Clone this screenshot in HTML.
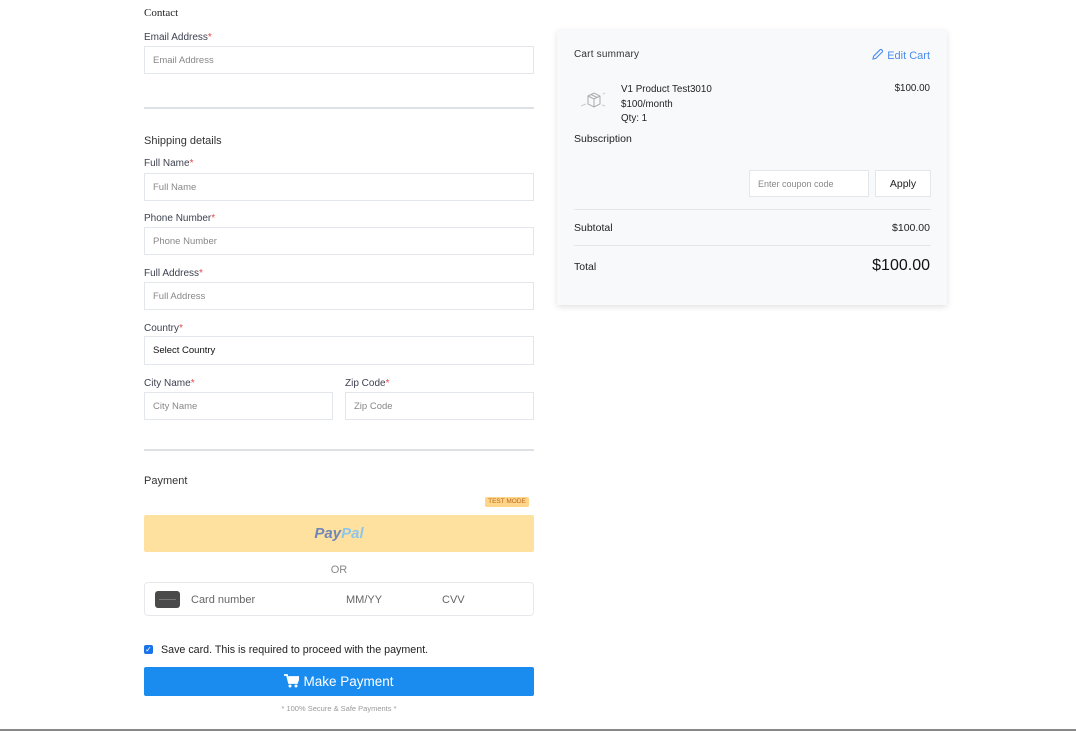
<!DOCTYPE html>
<html><head><meta charset="utf-8"><style>
*{margin:0;padding:0;box-sizing:border-box}
body{width:1076px;height:731px;background:#fff;position:relative;overflow:hidden;font-family:"Liberation Sans",sans-serif;color:#333}
.a{position:absolute;white-space:nowrap}
.lbl{font-size:10px;color:#3d4250}
.lbl b{color:#e5484d;font-weight:normal}
.in{position:absolute;border:1px solid #e3e6ea;background:#fff;font-size:9.5px;color:#888;padding-left:8px;display:flex;align-items:center}
.hr{position:absolute;left:144px;width:390px;height:2px;background:#dde1e6}
</style></head><body>
<div class="a" style="left:144px;top:7px;font-family:'Liberation Serif',serif;font-size:11px;color:#222">Contact</div>
<div class="a lbl" style="left:144px;top:32px">Email Address<b>*</b></div>
<div class="in" style="left:144px;top:46px;width:390px;height:28px">Email Address</div>
<div class="hr" style="top:107px"></div>
<div class="a" style="left:144px;top:135px;font-size:11px;color:#333">Shipping details</div>
<div class="a lbl" style="left:144px;top:158px">Full Name<b>*</b></div>
<div class="in" style="left:144px;top:173px;width:390px;height:28px">Full Name</div>
<div class="a lbl" style="left:144px;top:213px">Phone Number<b>*</b></div>
<div class="in" style="left:144px;top:227px;width:390px;height:28px">Phone Number</div>
<div class="a lbl" style="left:144px;top:268px">Full Address<b>*</b></div>
<div class="in" style="left:144px;top:282px;width:390px;height:28px">Full Address</div>
<div class="a lbl" style="left:144px;top:323px">Country<b>*</b></div>
<div class="in" style="left:144px;top:336px;width:390px;height:29px;color:#111">Select Country</div>
<div class="a lbl" style="left:144px;top:378px">City Name<b>*</b></div>
<div class="in" style="left:144px;top:392px;width:189px;height:28px">City Name</div>
<div class="a lbl" style="left:345px;top:378px">Zip Code<b>*</b></div>
<div class="in" style="left:345px;top:392px;width:189px;height:28px">Zip Code</div>
<div class="hr" style="top:449px"></div>
<div class="a" style="left:144px;top:475px;font-size:11px;color:#333">Payment</div>
<div class="a" style="left:485px;top:497px;width:44px;height:10px;background:#fdd68a;border-radius:2px;font-size:6.5px;color:#c0651a;text-align:center;line-height:10px">TEST MODE</div>
<div class="a" style="left:144px;top:515px;width:390px;height:37px;background:#fee19f;border-radius:2px;text-align:center;line-height:37px;font-size:15px;font-weight:bold;font-style:italic"><span style="color:#6f86b8">Pay</span><span style="color:#8ec6ea">Pal</span></div>
<div class="a" style="left:144px;top:564px;width:390px;text-align:center;font-size:11px;color:#888">OR</div>
<div class="a" style="left:144px;top:582px;width:390px;height:34px;border:1px solid #e6e8eb;border-radius:4px"></div>
<div class="a" style="left:155px;top:591px;width:25px;height:17px;background:#4a4a4a;border-radius:3px"><div style="position:absolute;left:4px;top:8px;width:17px;height:1px;background:#777"></div></div>
<div class="a" style="left:191px;top:594px;font-size:11px;color:#666">Card number</div>
<div class="a" style="left:346px;top:594px;font-size:11px;color:#666">MM/YY</div>
<div class="a" style="left:442px;top:594px;font-size:11px;color:#666">CVV</div>
<div class="a" style="left:144px;top:645px;width:9px;height:9px;background:#1a73e8;border-radius:2px;color:#fff;font-size:8px;line-height:9px;text-align:center">✓</div>
<div class="a" style="left:161px;top:644px;font-size:10.7px;color:#222">Save card. This is required to proceed with the payment.</div>
<div class="a" style="left:144px;top:667px;width:390px;height:29px;background:#1a8cf0;border-radius:2px;color:#fff;font-size:13.5px;text-align:center;line-height:29px">
<svg width="15" height="14" viewBox="0 0 15 14" style="vertical-align:-2px;margin-right:4px"><path d="M0 1h3l2 8h8l2-6H4.5" fill="none" stroke="#fff" stroke-width="1.8"/><path d="M4.5 3h10l-2 6h-7z" fill="#fff"/><circle cx="6" cy="12" r="1.5" fill="#fff"/><circle cx="12" cy="12" r="1.5" fill="#fff"/></svg>Make Payment</div>
<div class="a" style="left:144px;top:704px;width:390px;text-align:center;font-size:7.5px;color:#999">* 100% Secure &amp; Safe Payments *</div>
<div class="a" style="left:0;top:729px;width:1076px;height:2px;background:#888"></div>

<div class="a" style="left:557px;top:30px;width:390px;height:275px;background:#f8f9fb;box-shadow:0 2px 6px rgba(0,0,0,.12)">
<div class="a" style="left:17px;top:19px;font-size:10px;color:#333;letter-spacing:.2px">Cart summary</div>
<div class="a" style="right:17px;top:18px;font-size:11px;color:#4a8cf0"><svg width="13" height="13" viewBox="0 0 13 13" style="vertical-align:-2px;margin-right:3px"><path d="M2 11l.6-2.8L9 1.8a1.2 1.2 0 0 1 1.7 0l.5.5a1.2 1.2 0 0 1 0 1.7L4.8 10.4z" fill="none" stroke="#4a8cf0" stroke-width="1.1"/></svg>Edit Cart</div>
<svg class="a" style="left:22px;top:58px" width="30" height="28" viewBox="0 0 30 28"><path d="M9 8l6-3 6 3v8l-6 3-6-3z M9 8l6 3 6-3 M15 11v8 M12 6.5l6 3" fill="none" stroke="#aaa" stroke-width="1"/><path d="M2 18l5-2 M23 17l3 1 M24 6l2-1" stroke="#ccc"/></svg>
<div class="a" style="left:64px;top:53px;font-size:9.8px;line-height:14.5px;color:#222">V1 Product Test3010<br>$100/month<br>Qty: 1</div>
<div class="a" style="right:17px;top:53px;font-size:9.8px;color:#222">$100.00</div>
<div class="a" style="left:17px;top:103px;font-size:10.5px;color:#222">Subscription</div>
<div class="in" style="left:192px;top:140px;width:120px;height:27px;font-size:9px">Enter coupon code</div>
<div class="a" style="left:318px;top:140px;width:56px;height:27px;background:#fff;border:1px solid #e3e6ea;font-size:10.5px;color:#222;text-align:center;line-height:26px">Apply</div>
<div class="a" style="left:17px;top:179px;width:357px;height:1px;background:#e3e6ea"></div>
<div class="a" style="left:17px;top:192px;font-size:10.5px;color:#222">Subtotal</div>
<div class="a" style="right:17px;top:192px;font-size:10.5px;color:#222">$100.00</div>
<div class="a" style="left:17px;top:215px;width:357px;height:1px;background:#e3e6ea"></div>
<div class="a" style="left:17px;top:231px;font-size:10.5px;color:#222">Total</div>
<div class="a" style="right:17px;top:227px;font-size:16px;color:#111">$100.00</div>
</div>
</body></html>
